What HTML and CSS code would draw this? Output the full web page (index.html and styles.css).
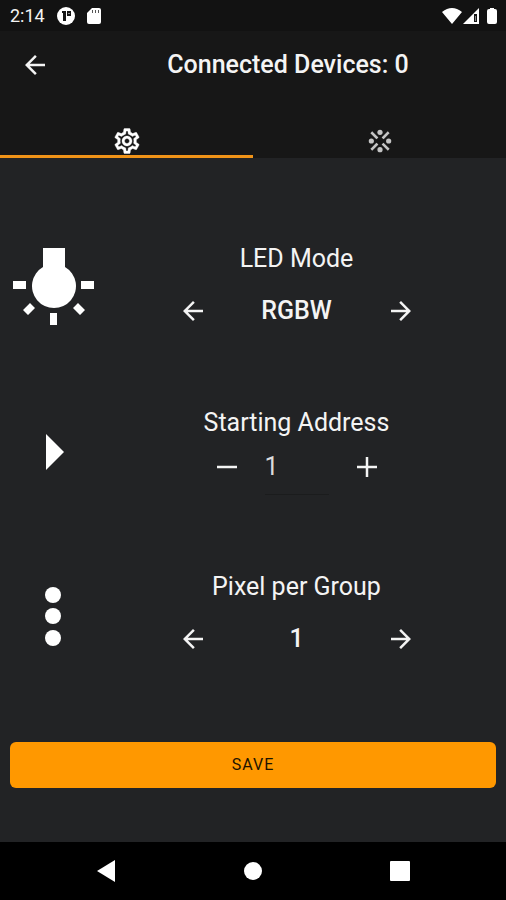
FILE: index.html
```html
<!DOCTYPE html>
<html lang="en">
<head>
<meta charset="utf-8">
<meta name="viewport" content="width=device-width, initial-scale=1">
<title>Connected Devices</title>
<link rel="stylesheet" href="styles.css">
</head>
<body>
<svg class="defs" aria-hidden="true">
  <symbol id="arrow-left" viewBox="0 0 24 24"><path d="M20 11H7.83l5.59-5.59L12 4l-8 8 8 8 1.41-1.41L7.83 13H20z"/></symbol>
  <symbol id="arrow-right" viewBox="0 0 24 24"><path d="M12 4l-1.41 1.41L16.17 11H4v2h12.17l-5.58 5.59L12 20l8-8z"/></symbol>
</svg>
<div class="screen">
  <div class="status">
    <span class="time">2:14</span>
    <svg class="status-app" viewBox="0 0 18 18" aria-hidden="true"><circle cx="9" cy="9" r="9" fill="#fff"/><path d="M5 4h4v10H6V6H5zM10 4h4v5h-4z" fill="#161616"/><path d="M11 6h2v1h-2z" fill="#888"/></svg>
    <svg class="status-card" viewBox="0 0 14 16" aria-hidden="true"><path d="M5 0h7q2 0 2 2v12q0 2-2 2H2q-2 0-2-2V5z" fill="#fff"/><path d="M5 2h1v3H5zM8 2h1v3H8zM11 2h1v3h-1z" fill="#555"/></svg>
    <svg class="status-signal" viewBox="0 0 56 18" aria-hidden="true"><path d="M0 5Q10-3 20 5L10 17zM21 17L37 1v16z" fill="#fff"/><path d="M32 7h3v8h-3z" fill="#161616"/><path d="M33 9h1v5h-1z" fill="#888"/><path d="M45 4q0-2 2-2h1V1h4v1h1q2 0 2 2v11q0 2-2 2h-6q-2 0-2-2z" fill="#fff"/></svg>
  </div>
  <header class="appbar">
    <button class="back" aria-label="Back"><svg class="icon"><use href="#arrow-left"/></svg></button>
    <h1>Connected Devices: 0</h1>
  </header>
  <nav class="tabs">
    <button class="tab tab-active" aria-label="Settings"><svg class="icon" viewBox="0 0 24 24"><path d="M19.43 12.98c.04-.32.07-.64.07-.98 0-.34-.03-.66-.07-.98l2.11-1.65c.19-.15.24-.42.12-.64l-2-3.46c-.09-.16-.26-.25-.44-.25-.06 0-.12.01-.17.03l-2.49 1c-.52-.4-1.08-.73-1.69-.98l-.38-2.65C14.46 2.18 14.25 2 14 2h-4c-.25 0-.46.18-.49.42l-.38 2.65c-.61.25-1.17.59-1.69.98l-2.49-1c-.06-.02-.12-.03-.18-.03-.17 0-.34.09-.43.25l-2 3.46c-.13.22-.07.49.12.64l2.11 1.65c-.04.32-.07.65-.07.98 0 .33.03.66.07.98l-2.11 1.65c-.19.15-.24.42-.12.64l2 3.46c.09.16.26.25.44.25.06 0 .12-.01.17-.03l2.49-1c.52.4 1.08.73 1.69.98l.38 2.65c.03.24.24.42.49.42h4c.25 0 .46-.18.49-.42l.38-2.65c.61-.25 1.17-.59 1.69-.98l2.49 1c.06.02.12.03.18.03.17 0 .34-.09.43-.25l2-3.46c.12-.22.07-.49-.12-.64l-2.11-1.65zm-1.98-1.71c.04.31.05.52.05.73 0 .21-.02.43-.05.73l-.14 1.13.89.7 1.08.84-.7 1.21-1.27-.51-1.04-.42-.9.68c-.43.32-.84.56-1.25.73l-1.06.43-.16 1.13-.2 1.35h-1.4l-.19-1.35-.16-1.13-1.06-.43c-.43-.18-.83-.41-1.23-.71l-.91-.7-1.06.43-1.27.51-.7-1.21 1.08-.84.89-.7-.14-1.13c-.03-.31-.05-.54-.05-.74s.02-.43.05-.73l.14-1.13-.89-.7-1.08-.84.7-1.21 1.27.51 1.04.42.9-.68c.43-.32.84-.56 1.25-.73l1.06-.43.16-1.13.2-1.35h1.39l.19 1.35.16 1.13 1.06.43c.43.18.83.41 1.23.71l.91.7 1.06-.43 1.27-.51.7 1.21-1.07.85-.89.7.14 1.13zM12 8c-2.21 0-4 1.79-4 4s1.79 4 4 4 4-1.79 4-4-1.79-4-4-4zm0 6c-1.1 0-2-.9-2-2s.9-2 2-2 2 .9 2 2-.9 2-2 2z" stroke="currentColor" stroke-width=".3"/></svg></button>
    <button class="tab" aria-label="Patterns"><svg class="icon" viewBox="0 0 30 30"><circle cx="15" cy="5" r="3"/><circle cx="15" cy="25" r="3"/><circle cx="5" cy="15" r="3"/><circle cx="25" cy="15" r="3"/><path d="M6 6l5 5M24 6l-5 5M6 24l5-5M24 24l-5-5" stroke="currentColor" stroke-width="3" stroke-linecap="square"/></svg></button>
  </nav>
  <main>
    <section class="row">
      <svg class="art" viewBox="0 1 84 84" aria-hidden="true"><path d="M31 4h22v19a22 22 0 1 1-22 0zM1 37h13v8H1zM69 37h13v8H69zM38 69h7v12h-7zM18 59l5 5-7 7-5-5zM66 59l7 7-5 5-7-7z"/></svg>
      <div class="setting">
        <h2>LED Mode</h2>
        <div class="picker">
          <button aria-label="Previous mode"><svg class="icon"><use href="#arrow-left"/></svg></button>
          <output>RGBW</output>
          <button aria-label="Next mode"><svg class="icon"><use href="#arrow-right"/></svg></button>
        </div>
      </div>
    </section>
    <section class="row">
      <svg class="art" viewBox="1 1 84 84" aria-hidden="true"><path d="M35 26l18 18-18 18z"/></svg>
      <div class="setting setting-field">
        <h2><label for="address">Starting Address</label></h2>
        <div class="stepper">
          <button aria-label="Decrease"><svg class="icon" viewBox="0 0 24 24"><path d="M4 11h16v2H4z"/></svg></button>
          <input id="address" type="text" inputmode="numeric" value="1">
          <button aria-label="Increase"><svg class="icon" viewBox="0 0 24 24"><path d="M20 13h-7v7h-2v-7H4v-2h7V4h2v7h7z"/></svg></button>
        </div>
      </div>
    </section>
    <section class="row">
      <svg class="art" viewBox="1 1 84 84" aria-hidden="true"><circle cx="42" cy="23" r="8"/><circle cx="42" cy="44" r="8"/><circle cx="42" cy="66" r="8"/></svg>
      <div class="setting">
        <h2>Pixel per Group</h2>
        <div class="picker">
          <button aria-label="Fewer pixels"><svg class="icon"><use href="#arrow-left"/></svg></button>
          <output>1</output>
          <button aria-label="More pixels"><svg class="icon"><use href="#arrow-right"/></svg></button>
        </div>
      </div>
    </section>
    <button class="save">SAVE</button>
  </main>
  <footer class="system-nav">
    <button aria-label="System back"><svg class="icon" viewBox="0 0 30 30"><path d="M24 4v22L6 15z"/></svg></button>
    <button aria-label="Home"><svg class="icon" viewBox="0 0 30 30"><circle cx="15" cy="15" r="9"/></svg></button>
    <button aria-label="Recent apps"><svg class="icon" viewBox="0 0 30 30"><rect x="5" y="5" width="20" height="20" rx="1"/></svg></button>
  </footer>
</div>
</body>
</html>
```
FILE: styles.css
```css
* {
  box-sizing: border-box;
}

body {
  margin: 0;
  background: #222325;
  color: #f4f4f4;
  font-family: Roboto, "Liberation Sans", sans-serif;
  font-size: 25px;
  line-height: 32px;
}

button {
  display: flex;
  align-items: center;
  justify-content: center;
  padding: 0;
  border: 0;
  background: none;
  color: inherit;
  font: inherit;
}

h1,
h2 {
  margin: 0;
  font-size: 25px;
  font-weight: 400;
}

.defs {
  display: none;
}

.icon {
  display: block;
  width: 30px;
  height: 30px;
  fill: currentColor;
}

.screen {
  display: flex;
  flex-direction: column;
  min-height: 100vh;
}

.status {
  display: flex;
  align-items: center;
  height: 31px;
  padding: 0 8px 0 10px;
  background: #121212;
  font-size: 18px;
}

.status-app {
  width: 18px;
  height: 18px;
  margin-left: 12px;
}

.status-card {
  width: 14px;
  height: 16px;
  margin-left: 12px;
}

.status-signal {
  width: 56px;
  height: 18px;
  margin-left: auto;
}

.appbar {
  display: grid;
  grid-template-columns: 70px 1fr;
  align-items: center;
  height: 68px;
  background: #171717;
}

.back {
  height: 48px;
}

h1 {
  font-weight: 500;
  text-align: center;
}

.tabs {
  display: grid;
  grid-template-columns: 1fr 1fr;
  height: 59px;
  background: #171717;
}

.tab {
  position: relative;
  align-items: flex-end;
  padding-bottom: 2px;
  color: #c4c4c4;
}

.tab:not(.tab-active) .icon {
  padding: 2px;
}

.tab-active {
  color: #fff;
}

.tab-active::after {
  content: "";
  position: absolute;
  right: 0;
  bottom: 0;
  left: 0;
  height: 3px;
  background: #f09318;
}

main {
  flex: 1;
  padding-top: 47px;
}

.row {
  display: grid;
  grid-template-columns: 107px 1fr;
  align-items: center;
  min-height: 164px;
  padding-right: 20px;
}

.art {
  width: 84px;
  height: 84px;
  justify-self: center;
  fill: #fff;
}

.setting {
  display: flex;
  flex-direction: column;
  align-items: center;
  gap: 16px;
}

.setting-field {
  gap: 4px;
}

.picker {
  display: flex;
  align-items: center;
  justify-content: space-between;
  width: 248px;
}

.picker button {
  width: 40px;
  height: 40px;
}

.picker output {
  font-weight: 500;
}

.stepper {
  display: flex;
  gap: 14px;
}

.stepper button {
  width: 48px;
  height: 48px;
}

.stepper input {
  width: 64px;
  height: 52px;
  padding: 0 0 4px;
  border: 0;
  border-bottom: 1px solid #1b1c1d;
  background: none;
  color: #dcdcdc;
  font: inherit;
}

.save {
  width: calc(100% - 20px);
  height: 46px;
  margin: 45px 10px 54px;
  border-radius: 6px;
  background: #ff9800;
  color: #1c1300;
  font-size: 16px;
  letter-spacing: 1px;
}

.system-nav {
  display: grid;
  grid-template-columns: repeat(3, 1fr);
  height: 58px;
  padding: 0 33px;
  background: #000;
  color: #fff;
}
```
